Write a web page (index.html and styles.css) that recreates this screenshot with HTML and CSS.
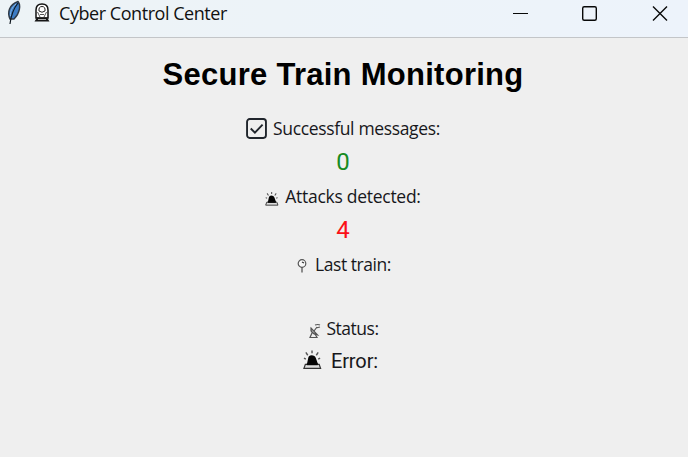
FILE: index.html
```html
<!DOCTYPE html>
<html lang="en">
<head>
<meta charset="utf-8">
<title>Cyber Control Center</title>
<link rel="stylesheet" href="styles.css">
</head>
<body>
<svg class="symbols" aria-hidden="true">
  <symbol id="siren" viewBox="0 0 20 20">
    <path d="M4 15 L5.500 8 Q6 5 9 5 Q12.500 5 13.500 8 L16 15Z" fill="#050505"/>
    <path d="M2.500 14.500 H17 L18.500 18.800 H1Z" fill="#ddd" stroke="#333" stroke-width="1.300"/>
    <path d="M4 14.500 H15.500" stroke="#050505" stroke-width="2"/>
    <path d="M9.500 0 V3 M3 2 L5 5 M16 2 L14 5 M1 8 L3 9 M18 8 L16 9" stroke="#555" stroke-width="1.500"/>
  </symbol>
</svg>
<header class="titlebar">
  <svg class="feather" viewBox="0 0 16 26"><path d="M4 19 C1 12 3 5 12 1.500 C15 5 14 13 8 19 Z" fill="#3d7cc4" stroke="#303a46" stroke-width="1.400"/><path d="M12 3 C8 8 5 15 4 24" fill="none" stroke="#101820" stroke-width="1.200"/><path d="M10 4 C6 7 4 12 4.500 16" fill="none" stroke="#83b6e8" stroke-width="1"/></svg>
  <svg class="train" viewBox="0 0 16 20"><path d="M2 15 V7 Q2 1 8 1 Q14 1 14 7 V15Z" fill="#fff" stroke="#111" stroke-width="1.500"/><path d="M5 8 Q4.500 3.500 8 3.500 Q11.500 3.500 11 8 Q8 10.500 5 8Z" fill="#fff" stroke="#222"/><path d="M3.500 9 L6 14 M12.500 9 L10 14 M6 11.500 H10" stroke="#555"/><path d="M3 14.500 H13 L15.500 18.500 H.5Z" fill="#161616"/><path d="M4 16.500 H12" stroke="#aaa"/></svg>
  <span class="caption">Cyber Control Center</span>
  <svg class="controls" viewBox="0 0 160 28" fill="none" stroke="#080808" stroke-width="1.400"><path d="M1 13.500 H16" stroke-width="1"/><rect x="70.700" y="6.700" width="13.600" height="13.600" rx="1.500"/><path d="M141 6.500 L155 20.500 M155 6.500 L141 20.500"/></svg>
</header>
<main class="panel">
  <h1 class="heading">Secure Train Monitoring</h1>
  <div class="row success"><svg class="check" viewBox="0 0 20 20"><rect x="1" y="1" width="18" height="18" rx="2.500" fill="none" stroke="#20252c" stroke-width="1.800"/><path d="M4.500 10 L8.500 14 L15.800 6.300" fill="none" stroke="#20252c" stroke-width="1.800"/></svg><span class="label">Successful messages:</span></div>
  <div class="row value good">0</div>
  <div class="row attacks"><svg class="siren-small"><use href="#siren"/></svg><span class="label">Attacks detected:</span></div>
  <div class="row value bad">4</div>
  <div class="row last"><svg class="pin" viewBox="0 0 10 14"><circle cx="5" cy="4.500" r="3.800" fill="#f8f8f8" stroke="#555" stroke-width="1.200"/><path d="M5 8 V13.500" stroke="#555" stroke-width="1.300"/><path d="M5 3 L7 4" stroke="#333" stroke-width="1.300"/></svg><span class="label">Last train:</span></div>
  <div class="row blank"></div>
  <div class="row status"><svg class="dish" viewBox="0 0 13 16" fill="none" stroke="#555" stroke-width="1.200"><path d="M3 5 Q2 10 9.500 12 Z" fill="#ddd"/><path d="M6 8 L9 4 M7 2 Q10 1 12 2 M8 5 L12 4 M4 10 L2 14.500 H9 L7 11"/></svg><span class="label">Status:</span></div>
  <div class="row error"><svg class="siren-large"><use href="#siren"/></svg><span class="label">Error:</span></div>
</main>
</body>
</html>
```
FILE: styles.css
```css
* { box-sizing: border-box; }
body { margin: 0; width: 688px; height: 457px; overflow: hidden; background: #efefef; color: #17171b; font-family: "Open Sans", "Noto Sans", sans-serif; }
.symbols { display: none; }
svg { flex: none; }
.titlebar { height: 38px; display: flex; align-items: flex-start; background: linear-gradient(90deg, #edf3f6, #edf3fb); border-bottom: 1px solid #c3c5c8; }
.feather { width: 16px; height: 26px; margin-left: 6px; }
.train { width: 16px; height: 20px; margin: 3px 0 0 12px; }
.caption { margin-left: 9px; font-size: 18px; line-height: 27px; letter-spacing: -.45px; white-space: nowrap; color: #111; }
.controls { width: 160px; height: 28px; margin: 0 16px 0 auto; }
.panel { display: flex; flex-direction: column; align-items: center; padding-right: 2px; }
.heading { margin: 18px 0 17px; height: 38px; font: bold 31px/38px "Liberation Sans", sans-serif; letter-spacing: .27px; color: #000; white-space: nowrap; }
.row { height: 34px; display: flex; align-items: center; justify-content: center; }
.label { font-size: 17.5px; line-height: 34px; letter-spacing: -.35px; white-space: nowrap; }
.check { width: 21px; height: 21px; margin-right: 6px; }
.value { font: 24px/34px Roboto, sans-serif; }
.good { color: #168b22; }
.bad { color: #fb1018; }
.siren-small { width: 14px; height: 14px; margin: 6px 6px 0 0; }
.attacks .label { letter-spacing: -.28px; }
.attacks .label, .last .label { padding-bottom: 1px; }
.pin { width: 10px; height: 14px; margin: 3px 8px 0 0; }
.last { padding-left: 2px; }
.last .label { letter-spacing: -.45px; }
.blank { height: 31px; }
.status { height: 32px; }
.status .label { letter-spacing: -.5px; }
.dish { width: 13px; height: 16px; margin: 5px 6px 0 0; }
.error { height: 33px; padding-right: 5px; }
.siren-large { width: 19px; height: 20px; margin: 0 9px 2px 0; }
.error .label { font: 20px/34px Roboto, sans-serif; letter-spacing: -.1px; }
```
